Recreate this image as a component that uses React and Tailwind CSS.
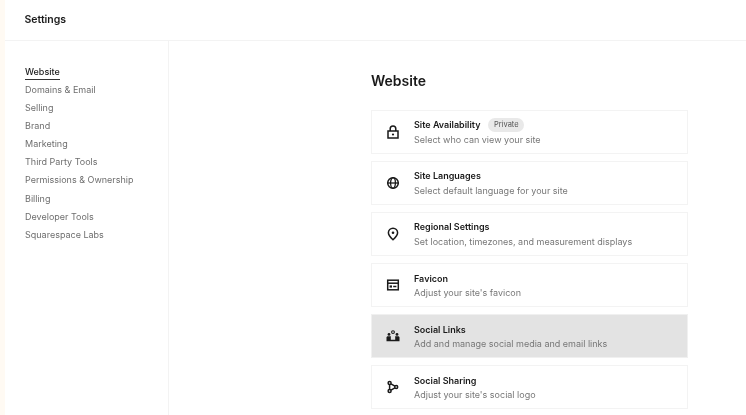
const nav = ["Domains & Email","Selling","Brand","Marketing","Third Party Tools","Permissions & Ownership","Billing","Developer Tools","Squarespace Labs"];

const Svg = ({children}) => (
  <svg width="14" height="14" viewBox="0 0 14 14" fill="none" stroke="#1a1a1a" strokeWidth="1.5" className="shrink-0">{children}</svg>
);

const icons = {
  lock: <Svg><rect x="2" y="6" width="10" height="7" /><path d="M4.2 6V3.8a2.8 2.8 0 0 1 5.6 0V6" /><circle cx="7" cy="9.5" r="1.1" fill="#1a1a1a" stroke="none" /></Svg>,
  globe: <Svg><circle cx="7" cy="7" r="5.3" /><ellipse cx="7" cy="7" rx="2.4" ry="5.3" strokeWidth="1.3" /><path d="M1.6 7h10.8" strokeWidth="1.3" /></Svg>,
  pin: <Svg><path d="M7 12.8C4.6 10.6 2.4 8.4 2.4 5.8a4.6 4.6 0 0 1 9.2 0c0 2.6-2.2 4.8-4.6 7Z" /><circle cx="7" cy="5.8" r="1.3" fill="#1a1a1a" stroke="none" /></Svg>,
  favicon: <Svg><rect x="1.7" y="2.2" width="10.6" height="9.6" /><path d="M1.7 5.2h10.6" /><path d="M3.6 7.4h2.4v2.2h-2.4z" fill="#1a1a1a" stroke="none" /><path d="M7.2 8.5h3.2" /></Svg>,
  people: <Svg>
    <circle cx="7" cy="3.1" r="1.4" strokeWidth="1.1" />
    <circle cx="3" cy="5.4" r="1.4" fill="#1a1a1a" stroke="none" />
    <circle cx="11" cy="5.4" r="1.4" fill="#1a1a1a" stroke="none" />
    <path d="M0.5 12.2V8.6c0-.8.6-1.4 1.4-1.4h10.2c.8 0 1.4.6 1.4 1.4v3.6Z" fill="#1a1a1a" stroke="none" />
    <path d="M4.8 10.8V7.4a1.2 1.2 0 0 1 1.2-1.2h2a1.2 1.2 0 0 1 1.2 1.2v3.4Z" fill="#e3e3e3" stroke="none" />
  </Svg>,
  share: <Svg>
    <circle cx="3.6" cy="3" r="1.5" />
    <circle cx="3.6" cy="11" r="1.5" />
    <circle cx="10.2" cy="7" r="1.5" />
    <path d="M3.6 4.5v5M5 3.8l3.9 2.4M5 10.2l3.9-2.4" />
  </Svg>,
};

const rows = [
  {icon:"lock", title:"Site Availability", sub:"Select who can view your site", badge:"Private"},
  {icon:"globe", title:"Site Languages", sub:"Select default language for your site"},
  {icon:"pin", title:"Regional Settings", sub:"Set location, timezones, and measurement displays"},
  {icon:"favicon", title:"Favicon", sub:"Adjust your site's favicon"},
  {icon:"people", title:"Social Links", sub:"Add and manage social media and email links", active:true},
  {icon:"share", title:"Social Sharing", sub:"Adjust your site's social logo"},
];

export default function App() {
  return (
    <div className="flex h-[415px] w-[746px] overflow-hidden bg-[#fffaf3] pl-[5px] font-['Inter',sans-serif] text-[#1a1a1a] blur-[0.35px]">
      <div className="flex min-w-0 flex-1 flex-col bg-white">
        <header className="flex h-[41px] shrink-0 items-center border-b border-[#f3f3f3] pl-[19.5px] text-[10.5px] font-semibold">
          Settings
        </header>
        <div className="flex min-h-0 flex-1">
          <nav className="flex w-[164px] shrink-0 flex-col border-r border-[#f3f3f3] pl-[20px] pt-[25px] text-[9px] leading-[18.1px] text-[#6e6e6e]">
            <div className="self-start">
              <span className="block border-b-[1.5px] border-[#333] font-medium leading-[12px] pb-[1px] text-[#1a1a1a]">Website</span>
            </div>
            <div className="mt-[1px] flex flex-col">
              {nav.map(n => <span key={n}>{n}</span>)}
            </div>
          </nav>
          <main className="flex-1 pl-[202px] pt-[30px]">
            <h1 className="text-[14px] font-semibold leading-[20px]">Website</h1>
            <div className="mt-[19px] flex w-[317px] flex-col gap-[7.1px]">
              {rows.map(r => (
                <div key={r.title} className={`flex h-[44px] items-center border-[1.5px] pl-[14px] ${r.active ? "border-[#f0f0f0] bg-[#e3e3e3]" : "border-[#f3f3f3] bg-white"}`}>
                  {icons[r.icon]}
                  <div className="ml-[14px] flex flex-col">
                    <div className="flex h-[14px] items-center gap-[8px]">
                      <span className="text-[9px] font-semibold">{r.title}</span>
                      {r.badge && <span className="rounded-full bg-[#e9e9e9] px-[5.5px] text-[7.5px] leading-[14px] text-[#555]">{r.badge}</span>}
                    </div>
                    <span className="mt-[1px] text-[9px] leading-[13px] text-[#777]">{r.sub}</span>
                  </div>
                </div>
              ))}
            </div>
          </main>
        </div>
      </div>
    </div>
  );
}
